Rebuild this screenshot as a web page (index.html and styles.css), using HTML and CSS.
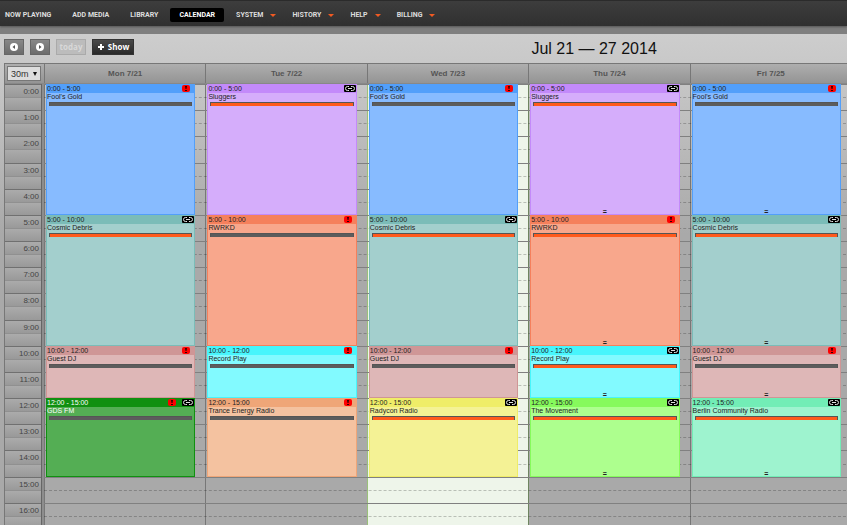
FILE: index.html
```html
<!DOCTYPE html>
<html lang="en">
<head>
  <meta charset="utf-8">
  <title>Calendar</title>
  <link rel="stylesheet" href="styles.css">
</head>
<body>
  <nav class="menu">
    <a href="#">NOW PLAYING</a>
    <a href="#">ADD MEDIA</a>
    <a href="#">LIBRARY</a>
    <a href="#" class="active">CALENDAR</a>
    <a href="#" class="drop">SYSTEM</a>
    <a href="#" class="drop">HISTORY</a>
    <a href="#" class="drop">HELP</a>
    <a href="#" class="drop">BILLING</a>
  </nav>

  <main class="content">
    <div class="toolbar">
      <div class="buttons">
        <button class="btn" aria-label="Previous week">
          <svg viewBox="0 0 8 8"><circle cx="4" cy="4" r="4" fill="#fff"/><path d="M5 2v4L2.500 4z" fill="#555"/></svg>
        </button>
        <button class="btn" aria-label="Next week">
          <svg viewBox="0 0 8 8"><circle cx="4" cy="4" r="4" fill="#fff"/><path d="M3 2v4L5.500 4z" fill="#555"/></svg>
        </button>
        <button class="btn today-btn" disabled>today</button>
        <button class="btn show-btn">
          <svg viewBox="0 0 8 8"><path d="M3 1h2v2h2v2H5v2H3V5H1V3h2z" fill="#fff"/></svg>
          Show
        </button>
      </div>
      <h1>Jul 21 — 27 2014</h1>
    </div>

    <div class="calendar">
      <div class="head">
        <div class="corner">
          <select aria-label="Slot length"><option>30m</option></select>
          <span class="arrow"></span>
        </div>
        <div>Mon 7/21</div>
        <div>Tue 7/22</div>
        <div>Wed 7/23</div>
        <div>Thu 7/24</div>
        <div>Fri 7/25</div>
      </div>
      <div class="grid" id="grid"></div>
    </div>
  </main>
  <script src="script.js"></script>
</body>
</html>
```

FILE: styles.css
```css
* {
  box-sizing: border-box;
}
body {
  margin: 0;
  height: 100vh;
  overflow: hidden;
  display: flex;
  flex-direction: column;
  background: #7f7f7f;
  font-family: "Liberation Sans", Arial, sans-serif;
  color: #111;
}

/* top menu */
.menu {
  display: flex;
  flex: none;
  align-items: center;
  gap: 3px;
  height: 26px;
  padding-top: 3px;
  background: linear-gradient(#3d3d3d, #303030);
  border-top: 1px solid #2b2b2b;
  box-shadow: 0 1px 2px #555;
}
.menu a {
  padding: 0 9px;
  border-radius: 2px;
  font-family: Roboto, "Liberation Sans", sans-serif;
  font-size: 7px;
  line-height: 14px;
  font-weight: bold;
  color: #ddd;
  text-decoration: none;
}
.menu a:first-child {
  padding-left: 5px;
}
.menu a.active {
  background: #000;
  color: #fff;
}
.menu .drop {
  display: flex;
  align-items: center;
  gap: 7px;
  padding-right: 4px;
}
.menu .drop::after {
  content: "";
  border: 3px solid transparent;
  border-top-color: #f15a22;
  border-bottom: 0;
}

.content {
  flex: 1;
  min-height: 0;
  margin-top: 8px;
  padding-left: 4px;
  overflow: hidden;
  background: linear-gradient(#cdcdcd, #c4c4c4 60px, #a9a9a9 200px);
}

/* toolbar */
.toolbar {
  display: grid;
  grid-template-columns: 1fr auto 1fr;
  align-items: center;
  width: 140%;
  height: 29px;
}
.toolbar h1 {
  margin: 0;
  font-size: 16px;
  line-height: 20px;
  font-weight: normal;
}
.buttons {
  display: flex;
  gap: 6px;
  margin-top: -4px;
}
.btn {
  display: flex;
  align-items: center;
  justify-content: center;
  gap: 3px;
  min-width: 20px;
  height: 16px;
  padding: 0 3px;
  border: 1px solid #666;
  background: linear-gradient(#888, #6c6c6c);
  font: bold 8px "Open Sans", "Liberation Sans", sans-serif;
  color: #fff;
}
.btn svg {
  width: 8px;
  height: 8px;
}
.today-btn {
  min-width: 30px;
  padding: 0 2px;
  border-color: #aaa;
  background: #bcbcbc;
  color: #d8d8d8;
}
.show-btn {
  min-width: 42px;
  border-color: #333;
  background: linear-gradient(#4a4a4a, #292929);
}

/* calendar */
.calendar {
  margin-right: -4px;
  border-left: 1px solid #777;
}
.head,
.grid {
  display: grid;
  grid-template-columns: 39px repeat(5, minmax(0, 1fr));
}
.head {
  height: 21px;
  border-top: 1px solid #777;
  border-bottom: 1px solid #888;
  background: linear-gradient(#aeaeae, #949494);
}
.head > div {
  border-left: 1px solid #777;
  font: bold 8px/19px "Liberation Sans", sans-serif;
  text-align: center;
  color: #555;
}
.head > .corner {
  display: grid;
  align-items: center;
  padding: 0 3px 0 2px;
  border-left: 0;
}
.corner > * {
  grid-area: 1 / 1;
}
.corner select {
  appearance: none;
  width: 34px;
  height: 15px;
  padding: 0 3px;
  border: 1px solid #777;
  border-radius: 0;
  background: #ddd;
  font: 9px "Liberation Sans", sans-serif;
  color: #333;
}
.arrow {
  justify-self: end;
  margin-right: 4px;
  border: 2px solid transparent;
  border-top: 4px solid #111;
  border-bottom: 0;
  pointer-events: none;
}

/* 17 hours in half-hour slots */
.grid {
  grid-template-rows: repeat(34, minmax(0, 1fr));
  height: 445px;
}
.day {
  grid-row: 1 / -1;
  border-left: 1px solid #777;
}
.day.first {
  box-shadow: -2px 0 #8d8d8d, -3px 0 #666;
}
.day.today {
  border-left-color: #9ac07a;
  background: #eef5ea;
}
.day.after-today {
  border-left-color: #6e8560;
}
.time {
  grid-column: 1;
  margin-right: 3px;
  padding: 1px 2px 0 0;
  border-top: 1px solid #909090;
  background: linear-gradient(#ababab, #999);
  font: 8px/12px "Liberation Sans", sans-serif;
  text-align: right;
  color: #444;
}
.time.hour {
  border-top-color: #707070;
}
.slot {
  grid-column: 2 / -1;
  border-top: 1px dashed rgba(0, 0, 0, 0.22);
}
.slot.hour {
  border-top: 1px solid #808080;
}
.event {
  z-index: 1;
  margin: 0 10px 0 2px;
  background: var(--body);
  border: 1px solid var(--top);
  border-top: 0;
  display: flex;
  flex-direction: column;
  font-size: 7px;
  line-height: 8px;
  color: #222;
}
.event.light {
  color: #fff;
}
.event header {
  display: flex;
  align-items: center;
  gap: 6px;
  height: 9px;
  flex: none;
  background: var(--top);
}
.event time {
  flex: 1;
  padding-top: 1px;
}
.event svg {
  flex: none;
  height: 7px;
}
.event .alert {
  width: 8px;
  margin-right: 4px;
}
.event .repeat {
  width: 12px;
}
.event .alert + .repeat {
  margin-left: -4px;
}
.bar {
  flex: none;
  height: 4px;
  margin: 1px 2px 0;
  border: 1px solid #555;
  border-width: 1px 1px 0;
  background: #5c5c5c;
}
.bar.full {
  background: #ff5a1c;
}
.grip {
  margin-top: auto;
  text-align: center;
  font-weight: bold;
  line-height: 4px;
}
```

FILE: script.js
```js
var grid = document.getElementById("grid");

var alertIcon = '<svg class="alert" viewBox="0 0 8 7"><rect width="8" height="7" rx="2" fill="#f00"/><path d="M3 1h2L4.500 4h-1zM3 5h2v1H3z" fill="#300"/></svg>';
var repeatIcon = '<svg class="repeat" viewBox="0 0 12 7"><rect width="12" height="7" rx="1" fill="#000"/><path d="M5 1.500H3.500a2 2 0 0 0 0 4H5M7 5.500h1.500a2 2 0 0 0 0-4H7M4 3.500h4" fill="none" stroke="#ddd"/></svg>';

// day, start, end, name, header colour, body colour, flags:
// a = alert, r = repeat, f = filled bar, g = resize grip, l = light text
var events = [
  [0, 0, 5, "Fool's Gold", "#529ffa", "#87bbff", "a"],
  [0, 5, 10, "Cosmic Debris", "#7bbcb8", "#a3cfcd", "rf"],
  [0, 10, 12, "Guest DJ", "#cf9696", "#deb7b7", "a"],
  [0, 12, 15, "GDS FM", "#109010", "#54ae54", "arl"],
  [1, 0, 5, "Sluggers", "#c38afa", "#d5adfb", "rf"],
  [1, 5, 10, "RWRKD", "#f5805c", "#f8a78c", "a"],
  [1, 10, 12, "Record Play", "#47f5fc", "#82faff", "a"],
  [1, 12, 15, "Trance Energy Radio", "#efa678", "#f4c2a0", "a"],
  [2, 0, 5, "Fool's Gold", "#529ffa", "#87bbff", "a"],
  [2, 5, 10, "Cosmic Debris", "#7bbcb8", "#a3cfcd", "rf"],
  [2, 10, 12, "Guest DJ", "#cf9696", "#deb7b7", "a"],
  [2, 12, 15, "Radycon Radio", "#efed68", "#f4f295", "rf"],
  [3, 0, 5, "Sluggers", "#c38afa", "#d5adfb", "rfg"],
  [3, 5, 10, "RWRKD", "#f5805c", "#f8a78c", "afg"],
  [3, 10, 12, "Record Play", "#47f5fc", "#82faff", "rfg"],
  [3, 12, 15, "The Movement", "#86fa5c", "#adff8e", "rfg"],
  [4, 0, 5, "Fool's Gold", "#529ffa", "#87bbff", "ag"],
  [4, 5, 10, "Cosmic Debris", "#7bbcb8", "#a3cfcd", "rfg"],
  [4, 10, 12, "Guest DJ", "#cf9696", "#deb7b7", "ag"],
  [4, 12, 15, "Berlin Community Radio", "#72edb6", "#9ef3cf", "rfg"]
];

var html = "";

for (var d = 0; d < 5; d++) {
  var cls = ["first", "", "today", "after-today", ""][d];
  html += '<div class="day ' + cls + '" style="grid-column:' + (d + 2) + '"></div>';
}

for (var s = 0; s < 34; s++) {
  var hour = s % 2 == 0;
  var row = ' style="grid-row:' + (s + 1) + '">';
  html += '<div class="time' + (hour ? " hour" : "") + '"' + row + (hour ? s / 2 + ":00" : "") + "</div>";
  html += '<div class="slot' + (hour ? " hour" : "") + '"' + row + "</div>";
}

events.forEach(function (e) {
  function has(flag) {
    return e[6].indexOf(flag) > -1;
  }
  html += '<article class="event' + (has("l") ? " light" : "") + '" style="grid-column:' + (e[0] + 2) +
    ";grid-row:" + (e[1] * 2 + 1) + "/" + (e[2] * 2 + 1) + ";--top:" + e[4] + ";--body:" + e[5] + '">' +
    "<header><time>" + e[1] + ":00 - " + e[2] + ":00</time>" +
    (has("a") ? alertIcon : "") + (has("r") ? repeatIcon : "") + "</header>" +
    "<div>" + e[3] + "</div>" +
    '<div class="bar' + (has("f") ? " full" : "") + '"></div>' +
    (has("g") ? '<div class="grip">=</div>' : "") +
    "</article>";
});

grid.innerHTML = html;
```
